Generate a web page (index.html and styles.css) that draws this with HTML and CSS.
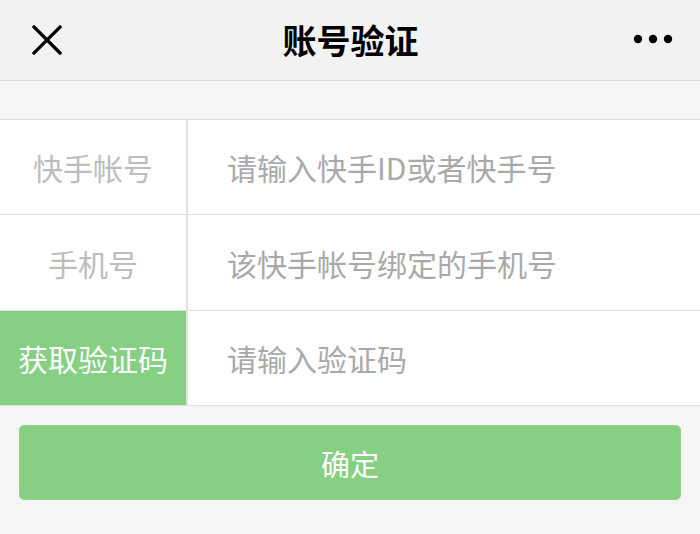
FILE: index.html
```html
<!DOCTYPE html>
<html lang="zh-CN">
<head>
<meta charset="utf-8">
<title>账号验证</title>
<link rel="stylesheet" href="styles.css">
</head>
<body>
<header class="topbar">
  <button class="icon-btn close" aria-label="关闭">
    <svg width="30" height="30" viewBox="0 0 30 30"><path d="M2 2 L28 28 M28 2 L2 28" stroke="#000" stroke-width="3.2" stroke-linecap="square" fill="none"/></svg>
  </button>
  <h1 class="title">账号验证</h1>
  <button class="icon-btn more" aria-label="更多">
    <svg width="40" height="10" viewBox="0 0 40 10"><circle cx="5" cy="5" r="4.2" fill="#000"/><circle cx="20" cy="5" r="4.2" fill="#000"/><circle cx="35" cy="5" r="4.2" fill="#000"/></svg>
  </button>
</header>
<main class="content">
  <div class="form">
    <div class="row">
      <div class="label">快手帐号</div>
      <input class="field" type="text" placeholder="请输入快手ID或者快手号">
    </div>
    <div class="row">
      <div class="label">手机号</div>
      <input class="field" type="tel" placeholder="该快手帐号绑定的手机号">
    </div>
    <div class="row">
      <div class="label label-action">获取验证码</div>
      <input class="field" type="text" placeholder="请输入验证码">
    </div>
  </div>
  <button class="submit">确定</button>
</main>
</body>
</html>
```
FILE: styles.css
```css
* { box-sizing: border-box; }
html, body {
  margin: 0;
  padding: 0;
  background: #f5f5f5;
  font-family: "Noto Sans CJK SC", "Noto Sans", sans-serif;
}
.topbar {
  height: 81px;
  background: #f2f2f2;
  border-bottom: 1px solid #d9d9d9;
  display: flex;
  align-items: center;
  justify-content: space-between;
  padding: 0 27px 0 32px;
}
.icon-btn {
  border: 0;
  background: none;
  padding: 0;
  display: flex;
  align-items: center;
  justify-content: center;
}
.close { width: 30px; height: 30px; }
.more { width: 40px; height: 10px; margin-top: -2px; }
.title {
  margin: 0 0 0 6px;
  font-size: 34px;
  font-weight: 700;
  color: #000;
  line-height: 1;
}
.content {
  padding-top: 38px;
}
.form {
  background: #fff;
  border-top: 1px solid #dedede;
}
.row {
  display: flex;
  height: 95px;
  border-bottom: 1px solid #dedede;
}
.row:nth-child(2) { height: 96px; }
.label {
  width: 188px;
  flex: 0 0 188px;
  border-right: 2px solid #e2e2e2;
  display: flex;
  align-items: center;
  justify-content: center;
  font-size: 30px;
  color: #bdbdbd;
}
.label-action {
  background: #86cf83;
  color: #fff;
}
.field {
  flex: 1;
  border: 0;
  outline: none;
  background: #fff;
  padding: 0 0 0 39px;
  font-family: "Noto Sans CJK SC", "Noto Sans", sans-serif;
  font-size: 30px;
  color: #333;
  min-width: 0;
}
.field::placeholder { color: #a9a9a9; }
.submit {
  display: block;
  margin: 19px 19px 0;
  width: calc(100% - 38px);
  height: 75px;
  border: 1px solid #8fd68c;
  border-radius: 5px;
  background: #86cf83;
  color: #fff;
  font-family: "Noto Sans CJK SC", "Noto Sans", sans-serif;
  font-size: 29px;
  padding: 0;
}
```
